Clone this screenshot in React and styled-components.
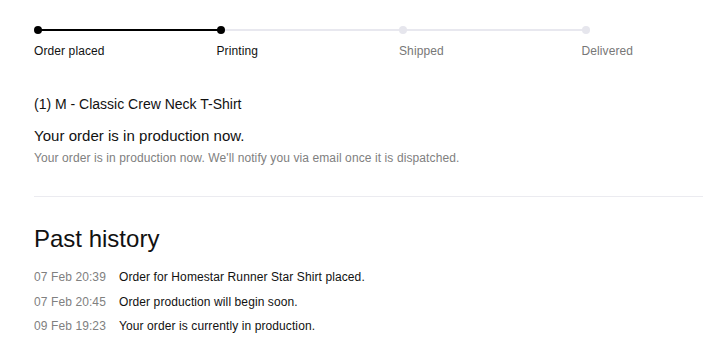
import styled, { createGlobalStyle } from "styled-components";

const GlobalStyle = createGlobalStyle`
  body {
    margin: 0;
    background: #fff;
    font-family: "Liberation Sans", Arial, sans-serif;
    color: #111;
    overflow: hidden;
  }
`;

const Page = styled.div`
  padding: 26px 0 0 34px;
  letter-spacing: 0.1px;
`;

const Stepper = styled.div`
  display: flex;
`;

const Step = styled.div`
  position: relative;
  width: ${({ $last }) => ($last ? "auto" : "182.5px")};
  flex-shrink: 0;
`;

const Track = styled.div`
  position: relative;
  height: 8px;
`;

const Line = styled.div`
  position: absolute;
  left: 4px;
  right: -4px;
  top: 3px;
  height: 2px;
  background: ${({ $done }) => ($done ? "#000" : "#e8e8ef")};
`;

const Dot = styled.div`
  position: absolute;
  left: 0;
  top: 0;
  width: 8px;
  height: 8px;
  border-radius: 50%;
  background: ${({ $done }) => ($done ? "#000" : "#e6e6ed")};
`;

const StepLabel = styled.div`
  margin-top: 10px;
  font-size: 12px;
  line-height: 14px;
  color: ${({ $done }) => ($done ? "#111" : "#777")};
`;

const Product = styled.div`
  margin-top: 37px;
  font-size: 14px;
  line-height: 18px;
  letter-spacing: 0;
`;

const StatusTitle = styled.div`
  margin-top: 14px;
  font-size: 15px;
  line-height: 18px;
  letter-spacing: 0.03px;
`;

const StatusText = styled.div`
  margin-top: 6px;
  font-size: 12px;
  line-height: 14px;
  color: #808080;
`;

const Divider = styled.hr`
  border: 0;
  border-top: 1px solid #ebebf0;
  margin: 31px 0 0;
`;

const Heading = styled.h2`
  margin: 28px 0 0;
  font-size: 24px;
  font-weight: normal;
  line-height: 28px;
  letter-spacing: 0;
`;

const History = styled.div`
  margin-top: 12px;
  display: flex;
  flex-direction: column;
`;

const Row = styled.div`
  display: flex;
  font-size: 12px;
  line-height: 24.5px;
`;

const Time = styled.span`
  width: 85px;
  color: #808080;
`;

const Event = styled.span`
  color: #111;
`;

const steps = [
  { label: "Order placed", done: true, lineDone: true },
  { label: "Printing", done: true, lineDone: false },
  { label: "Shipped", done: false, lineDone: false },
  { label: "Delivered", done: false, lineDone: null },
];

const history = [
  ["07 Feb 20:39", "Order for Homestar Runner Star Shirt placed."],
  ["07 Feb 20:45", "Order production will begin soon."],
  ["09 Feb 19:23", "Your order is currently in production."],
];

export default function App() {
  return (
    <Page>
      <GlobalStyle />
      <Stepper>
        {steps.map((s) => (
          <Step key={s.label} $last={s.lineDone === null}>
            <Track>
              {s.lineDone !== null && <Line $done={s.lineDone} />}
              <Dot $done={s.done} />
            </Track>
            <StepLabel $done={s.done}>{s.label}</StepLabel>
          </Step>
        ))}
      </Stepper>
      <Product>(1) M - Classic Crew Neck T-Shirt</Product>
      <StatusTitle>Your order is in production now.</StatusTitle>
      <StatusText>
        Your order is in production now. We'll notify you via email once it is
        dispatched.
      </StatusText>
      <Divider />
      <Heading>Past history</Heading>
      <History>
        {history.map(([t, e]) => (
          <Row key={t}>
            <Time>{t}</Time>
            <Event>{e}</Event>
          </Row>
        ))}
      </History>
    </Page>
  );
}
